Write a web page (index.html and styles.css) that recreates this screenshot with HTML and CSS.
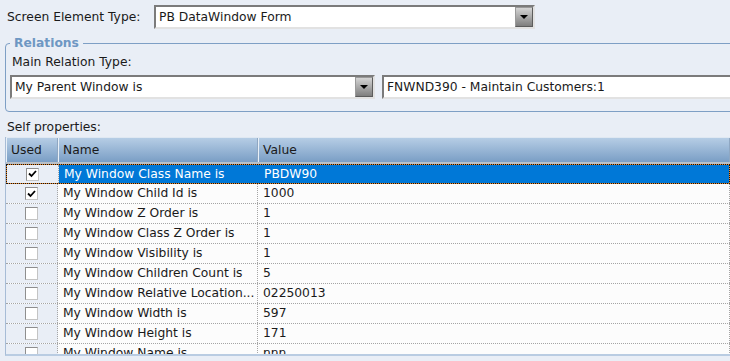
FILE: index.html
```html
<!DOCTYPE html>
<html>
<head>
    <title>Screen Element</title>
    <link rel="stylesheet" href="styles.css">
</head>
<body>
    <div class="field-row">
        <label class="field-label">Screen Element Type:</label>
        <div class="combo combo-type">
            <span class="combo-text">PB DataWindow Form</span>
            <span class="combo-btn"><span class="arrow"></span></span>
        </div>
    </div>

    <fieldset class="relations">
        <legend>Relations</legend>
        <div class="sub-label">Main Relation Type:</div>
        <div class="relation-row">
            <div class="combo combo-relation">
                <span class="combo-text">My Parent Window is</span>
                <span class="combo-btn"><span class="arrow"></span></span>
            </div>
            <div class="textbox">FNWND390 - Maintain Customers:1</div>
        </div>
    </fieldset>

    <div class="section-label">Self properties:</div>

    <div class="grid">
        <div class="grid-head">
            <div class="head-cell">Used</div>
            <div class="head-cell">Name</div>
            <div class="head-cell">Value</div>
        </div>

        <div class="grid-row selected">
            <div class="cell used"><span class="check"><svg width="9" height="8" viewBox="0 0 9 8"><path d="M1 3.5 L3.5 6 L8 1" fill="none" stroke="#000" stroke-width="1.8"/></svg></span></div>
            <div class="cell">My Window Class Name is</div>
            <div class="cell">PBDW90</div>
        </div>
        <div class="grid-row">
            <div class="cell used"><span class="check"><svg width="9" height="8" viewBox="0 0 9 8"><path d="M1 3.5 L3.5 6 L8 1" fill="none" stroke="#000" stroke-width="1.8"/></svg></span></div>
            <div class="cell">My Window Child Id is</div>
            <div class="cell">1000</div>
        </div>
        <div class="grid-row">
            <div class="cell used"><span class="check"></span></div>
            <div class="cell">My Window Z Order is</div>
            <div class="cell">1</div>
        </div>
        <div class="grid-row">
            <div class="cell used"><span class="check"></span></div>
            <div class="cell">My Window Class Z Order is</div>
            <div class="cell">1</div>
        </div>
        <div class="grid-row">
            <div class="cell used"><span class="check"></span></div>
            <div class="cell">My Window Visibility is</div>
            <div class="cell">1</div>
        </div>
        <div class="grid-row">
            <div class="cell used"><span class="check"></span></div>
            <div class="cell">My Window Children Count is</div>
            <div class="cell">5</div>
        </div>
        <div class="grid-row">
            <div class="cell used"><span class="check"></span></div>
            <div class="cell">My Window Relative Location...</div>
            <div class="cell">02250013</div>
        </div>
        <div class="grid-row">
            <div class="cell used"><span class="check"></span></div>
            <div class="cell">My Window Width is</div>
            <div class="cell">597</div>
        </div>
        <div class="grid-row">
            <div class="cell used"><span class="check"></span></div>
            <div class="cell">My Window Height is</div>
            <div class="cell">171</div>
        </div>
        <div class="grid-row">
            <div class="cell used"><span class="check"></span></div>
            <div class="cell">My Window Name is</div>
            <div class="cell">nnn</div>
        </div>
    </div>
</body>
</html>
```

FILE: styles.css
```css
* {
    box-sizing: border-box;
}

body {
    margin: 0;
    width: 730px;
    height: 361px;
    overflow: hidden;
    background: #e9eef6;
    font-family: 'DejaVu Sans', Verdana, sans-serif;
    font-size: 12.3px;
    color: #1a1a1a;
}

.field-row {
    display: flex;
    align-items: center;
    padding: 5px 0 0 7px;
}

.field-label {
    width: 147px;
}

.combo,
.textbox {
    display: flex;
    height: 24px;
    background: #fff;
    border: 2px solid;
    border-color: #7b7b7b #e2e2e2 #e2e2e2 #7b7b7b;
}

.combo-type {
    width: 381px;
}

.combo-relation {
    width: 365px;
}

.combo-text {
    flex: 1;
    padding-left: 3px;
    line-height: 20px;
}

.combo-btn {
    display: flex;
    align-items: center;
    justify-content: center;
    width: 18px;
    border: 1px solid #5c5c5c;
    border-top-color: #9a9a9a;
    border-left-color: #9a9a9a;
    background: linear-gradient(#d4d4d4, #7e7e7e);
}

.arrow {
    width: 0;
    height: 0;
    border-left: 4px solid transparent;
    border-right: 4px solid transparent;
    border-top: 4px solid #000;
}

.relations {
    width: 800px;
    margin: 7px 0 0 5px;
    padding: 5px 0 12px 4px;
    border: 1px solid #7e9fc5;
    border-radius: 4px;
}

.relations legend {
    padding: 0 4px;
    line-height: 14px;
    font-weight: bold;
    color: #6e97c3;
}

.sub-label {
    padding-left: 2px;
    line-height: 14px;
    margin-bottom: 6px;
}

.relation-row {
    display: flex;
    gap: 7px;
}

.textbox {
    width: 420px;
    padding-left: 3px;
    line-height: 20px;
}

.section-label {
    margin-top: 8px;
    padding-left: 7px;
    line-height: 14px;
}

.grid {
    margin: 3px 0 0 5px;
    height: 219px;
    overflow: hidden;
    border-left: 1px solid #a7bcd6;
    border-bottom: 2px solid #b9cce2;
    background: #fcfcfc;
}

.grid-head,
.grid-row {
    display: grid;
    grid-template-columns: 52px 200px 1fr;
}

.grid-head {
    height: 27px;
    border-top: 1px solid #dfe8f2;
    border-bottom: 2px solid #b8c0c9;
    background: linear-gradient(#b6cde5, #7a9ec5);
}

.head-cell {
    padding-left: 4px;
    line-height: 24px;
    border-left: 1px solid #e8f0f8;
    border-right: 1px solid #8fa7c2;
}

.grid-row {
    height: 20px;
    border-bottom: 1px dotted #a5a5a5;
}

.cell {
    padding-left: 5px;
    line-height: 19px;
    white-space: nowrap;
    overflow: hidden;
    border-right: 1px dotted #a5a5a5;
}

.cell.used {
    display: flex;
    align-items: center;
    justify-content: center;
    padding-left: 0;
    background: #e9eef6;
}

.check {
    display: flex;
    align-items: center;
    justify-content: center;
    width: 13px;
    height: 13px;
    background: #fff;
    border: 1px solid #8e8e8e;
    border-right-color: #c4c4c4;
    border-bottom-color: #c4c4c4;
}

.grid-row.selected {
    border: 1px dotted #111;
    background: #e8892c;
}

.grid-row.selected .cell {
    background: #0078d7;
    color: #fff;
    line-height: 18px;
    border-right-color: #0078d7;
}

.grid-row.selected .cell.used {
    background: #e9eef6;
    border-right: 1px dotted #a5a5a5;
}
```
